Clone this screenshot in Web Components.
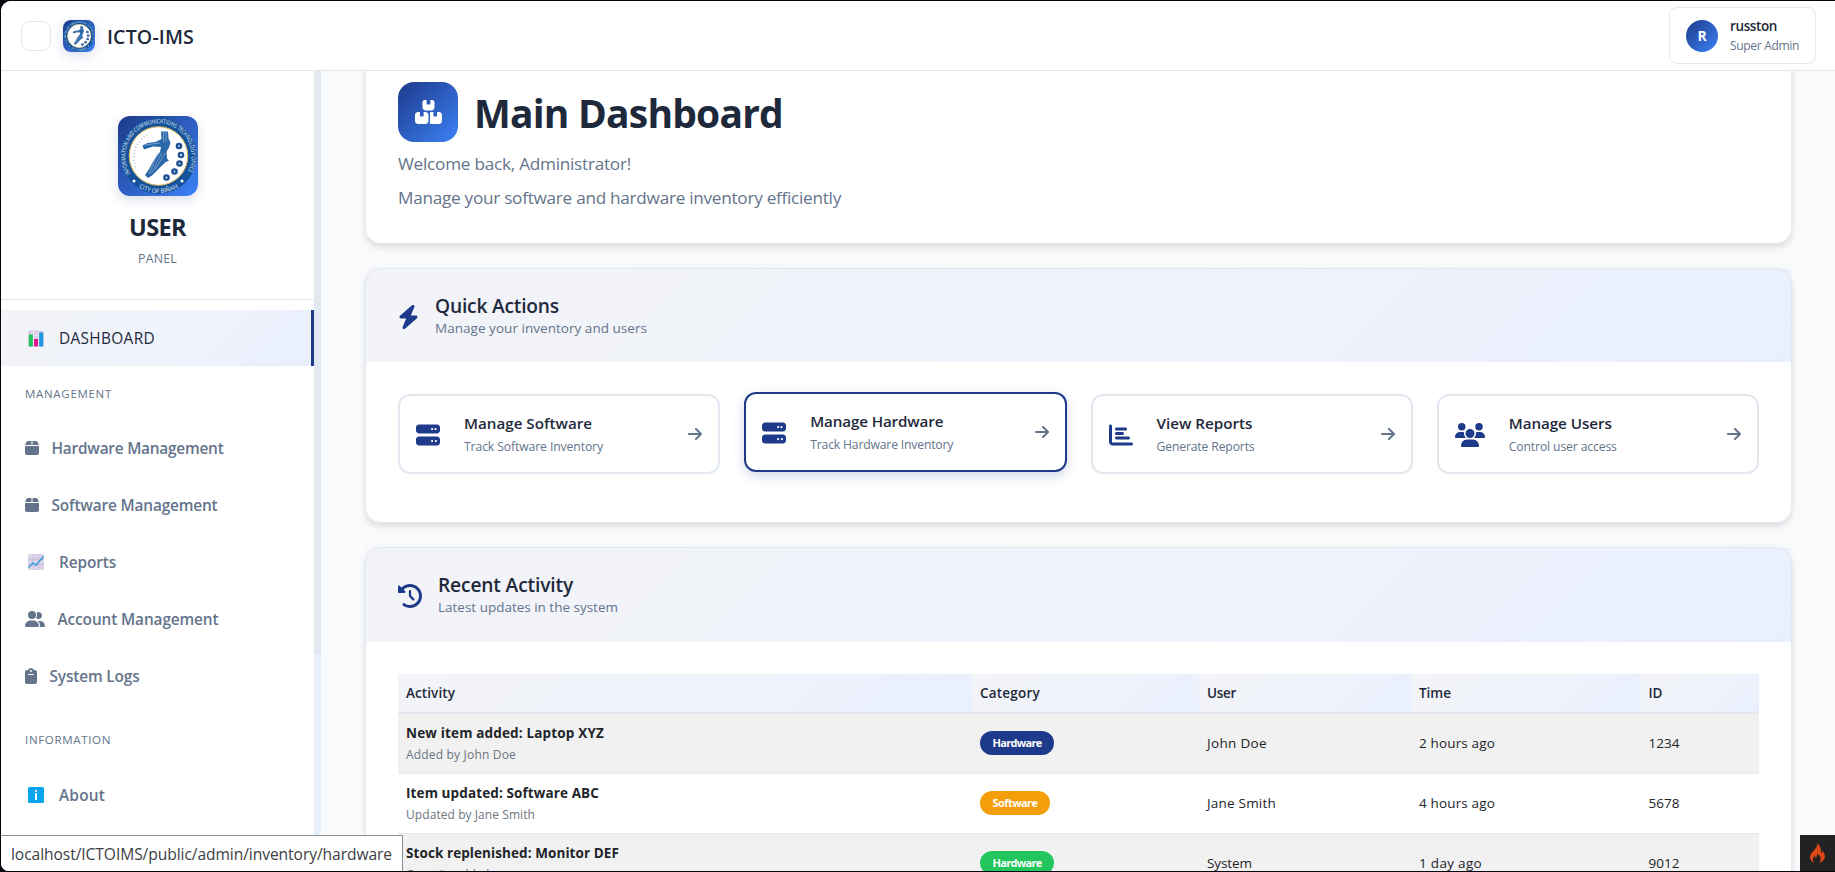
<!DOCTYPE html>
<html lang="en">
<head>
<meta charset="utf-8">
<title>ICTO-IMS</title>
<style>
html,body{margin:0;height:872px;overflow:hidden;background:#05060f}
body{font-family:"Open Sans","Noto Sans",sans-serif;color:#1e293b}
</style>
</head>
<body>
<ims-app></ims-app>
<script>
const ICONS = {
  bolt:[448,'M349.4 44.6c5.9-13.7 1.5-29.7-10.6-38.5s-28.6-8-39.9 1.8l-256 224c-10 8.8-13.6 22.9-8.9 35.3S50.7 288 64 288H175.5L98.6 467.4c-5.9 13.7-1.5 29.7 10.6 38.5s28.6 8 39.9-1.8l256-224c10-8.8 13.6-22.9 8.9-35.3s-16.6-20.7-30-20.7H272.5L349.4 44.6z'],
  server:[512,'M64 32C28.7 32 0 60.7 0 96v64c0 35.3 28.7 64 64 64H448c35.3 0 64-28.7 64-64V96c0-35.3-28.7-64-64-64H64zm280 72a24 24 0 1 1 0 48 24 24 0 1 1 0-48zm48 24a24 24 0 1 1 48 0 24 24 0 1 1 -48 0zM64 288c-35.3 0-64 28.7-64 64v64c0 35.3 28.7 64 64 64H448c35.3 0 64-28.7 64-64V352c0-35.3-28.7-64-64-64H64zm280 72a24 24 0 1 1 0 48 24 24 0 1 1 0-48zm56 24a24 24 0 1 1 48 0 24 24 0 1 1 -48 0z'],
  boxes:[576,'M248 0H208c-26.5 0-48 21.5-48 48V160c0 35.3 28.7 64 64 64H352c35.3 0 64-28.7 64-64V48c0-26.5-21.5-48-48-48H328V80c0 8.8-7.2 16-16 16H264c-8.8 0-16-7.2-16-16V0zM64 256c-35.3 0-64 28.7-64 64V448c0 35.3 28.7 64 64 64H224c35.3 0 64-28.7 64-64V320c0-35.3-28.7-64-64-64H184v80c0 8.8-7.2 16-16 16H120c-8.8 0-16-7.2-16-16V256H64zM352 512H512c35.3 0 64-28.7 64-64V320c0-35.3-28.7-64-64-64H472v80c0 8.8-7.2 16-16 16H408c-8.8 0-16-7.2-16-16V256H352c-15 0-28.8 5.1-39.7 13.8c4.9 10.4 7.7 22 7.7 34.2V464c0 12.2-2.8 23.8-7.7 34.2C323.2 506.9 337 512 352 512z'],
  box:[448,'M50.7 58.5L0 160H208V32H93.7C75.5 32 58.9 42.3 50.7 58.5zM240 160H448L397.3 58.5C389.1 42.3 372.5 32 354.3 32H240V160zm208 32H0V416c0 35.3 28.7 64 64 64H384c35.3 0 64-28.7 64-64V192z'],
  group:[640,'M96 128a128 128 0 1 1 256 0A128 128 0 1 1 96 128zM0 482.3C0 383.8 79.8 304 178.3 304h91.4C368.2 304 448 383.8 448 482.3c0 16.4-13.3 29.7-29.7 29.7H29.7C13.3 512 0 498.7 0 482.3zM609.3 512H471.4c5.4-9.4 8.6-20.3 8.6-32v-8c0-60.7-27.1-115.2-69.8-151.8c2.4-.1 4.7-.2 7.1-.2h61.4C567.8 320 640 392.2 640 481.3c0 17-13.8 30.7-30.7 30.7zM432 256c-31 0-59-12.6-79.3-32.9C372.4 196.5 384 163.6 384 128c0-26.8-6.6-52.1-18.3-74.3C384.3 40.1 407.2 32 432 32c61.9 0 112 50.1 112 112s-50.1 112-112 112z'],
  clipboard:[384,'M192 0c-41.8 0-77.4 26.7-90.5 64H64C28.7 64 0 92.7 0 128V448c0 35.3 28.7 64 64 64H320c35.3 0 64-28.7 64-64V128c0-35.3-28.7-64-64-64H282.5C269.4 26.7 233.8 0 192 0zm0 64a32 32 0 1 1 0 64 32 32 0 1 1 0-64zM112 192H272c8.8 0 16 7.2 16 16s-7.2 16-16 16H112c-8.8 0-16-7.2-16-16s7.2-16 16-16z'],
  arrow:[448,'M438.6 278.6c12.5-12.5 12.5-32.8 0-45.3l-160-160c-12.5-12.5-32.8-12.5-45.3 0s-12.5 32.8 0 45.3L338.8 224 32 224c-17.7 0-32 14.3-32 32s14.3 32 32 32l306.7 0L233.4 393.4c-12.5 12.5-12.5 32.8 0 45.3s32.8 12.5 45.3 0l160-160z'],
  history:[512,'M75 75L41 41C25.9 25.9 0 36.6 0 57.9V168c0 13.3 10.7 24 24 24H134.1c21.4 0 32.1-25.9 17-41l-30.8-30.8C155 85.5 203 64 256 64c106 0 192 86 192 192s-86 192-192 192c-40.8 0-78.6-12.7-109.7-34.4c-14.5-10.1-34.4-6.6-44.6 7.9s-6.6 34.4 7.9 44.6C151.2 495 201.7 512 256 512c141.4 0 256-114.6 256-256S397.4 0 256 0C185.3 0 121.3 28.7 75 75zm181 53c-13.3 0-24 10.7-24 24V256c0 6.4 2.5 12.5 7 17l72 72c9.4 9.4 24.6 9.4 33.9 0s9.4-24.6 0-33.9l-65-65V152c0-13.3-10.7-24-24-24z'],
  chart:[512,'M32 32c17.7 0 32 14.3 32 32V400c0 8.8 7.2 16 16 16H480c17.7 0 32 14.3 32 32s-14.3 32-32 32H80c-44.2 0-80-35.8-80-80V64C0 46.3 14.3 32 32 32zm96 96c0-17.7 14.3-32 32-32l192 0c17.7 0 32 14.3 32 32s-14.3 32-32 32l-192 0c-17.7 0-32-14.3-32-32zm32 64H288c17.7 0 32 14.3 32 32s-14.3 32-32 32H160c-17.7 0-32-14.3-32-32s14.3-32 32-32zm0 96H416c17.7 0 32 14.3 32 32s-14.3 32-32 32H160c-17.7 0-32-14.3-32-32s14.3-32 32-32z'],
  users:[640,'M144 0a80 80 0 1 1 0 160A80 80 0 1 1 144 0zM512 0a80 80 0 1 1 0 160A80 80 0 1 1 512 0zM0 298.7C0 239.8 47.8 192 106.7 192h42.7c15.9 0 31 3.5 44.6 9.7c-1.3 7.2-1.9 14.7-1.9 22.3c0 38.2 16.8 72.5 43.3 96c-.2 0-.4 0-.7 0H21.3C9.6 320 0 310.4 0 298.7zM405.3 320c-.2 0-.4 0-.7 0c26.6-23.5 43.3-57.8 43.3-96c0-7.6-.7-15-1.9-22.3c13.6-6.3 28.7-9.7 44.6-9.7h42.7C592.2 192 640 239.8 640 298.7c0 11.8-9.6 21.3-21.3 21.3H405.3zM224 224a96 96 0 1 1 192 0 96 96 0 1 1 -192 0zM128 485.3C128 411.7 187.7 352 261.3 352H378.7C452.3 352 512 411.7 512 485.3c0 14.7-11.9 26.7-26.7 26.7H154.7c-14.7 0-26.7-11.9-26.7-26.7z']
};
const ART = {
  bars:'<svg viewBox="0 0 16 17" width="16" height="17"><rect width="16" height="16" y=".5" rx="1.5" fill="#d9cfe6"/><path d="M0 5.5h16M0 11h16M5.3 .5v16M10.7 .5v16" stroke="#efe9f5" stroke-width=".8"/><rect x=".8" y="4.5" width="4" height="12" fill="#1fc35c"/><rect x="6" y="9" width="4" height="7.500" fill="#e5178f"/><rect x="11.200" y="2.500" width="4" height="14" fill="#1d96e0"/></svg>',
  trend:'<svg viewBox="0 0 16 16" width="16" height="16"><rect width="16" height="16" rx="1.500" fill="#ddd3e8"/><path d="M0 5.300h16M0 10.700h16M5.300 0v16M10.700 0v16" stroke="#c9bcd8" stroke-width=".8"/><path d="M.5 13.500L5 9l3 2.300L15.700 2.300" fill="none" stroke="#2f9be0" stroke-width="1.400"/></svg>',
  info:'<svg viewBox="0 0 16 16" width="16" height="16"><rect width="16" height="16" rx="1.500" fill="#08a5ee"/><rect x="7.100" y="3" width="1.900" height="1.900" fill="#fff"/><rect x="7.100" y="6.200" width="1.900" height="6.800" fill="#fff"/></svg>',
  flame:'<svg viewBox="0 0 18 21" width="17" height="20"><path d="M8.600 0c1 2.600-.4 4.300-2.300 6.400C3.500 9.400 1 11.600 1 14.700c0 2.900 2 5.200 5 6.100-1.500-1.200-2-2.300-1.900-3.700.1-1.500 1.200-2.500 1.500-3.700 1 .6 1.300 1.500 1.200 2.600 1.600-1.300 2.100-3 1.700-4.900 2.500 1.500 3.900 3.600 3.900 5.700 0 1.700-.8 3-2.100 4 3.700-.9 6.500-3.200 6.500-6.700 0-2.500-1.300-4.300-2.700-6.200.1 1.500-.5 2.500-1.500 3.100C13.400 6.900 11.800 2.600 8.600 0z" fill="#dd4814"/></svg>'
};
function element(name, html, after){
  customElements.define(name, class extends HTMLElement{
    constructor(){ super(); this.attachShadow({mode:'open'}); }
    connectedCallback(){
      this.shadowRoot.innerHTML = typeof html === 'function' ? html(this) : html;
      if(after) after(this);
    }
  });
}
const GRAD='linear-gradient(135deg,#1e3a8a,#3b82f6)';
const SOFT='linear-gradient(135deg,#f3f4f8 0%,#eff3fb 50%,#e9f0fd 100%)';

element('ims-icon', e=>{
  const n=e.getAttribute('name');
  if(ART[n]) return `<style>:host{display:flex;flex:none}</style>${ART[n]}`;
  const [w,d]=ICONS[n], s=+e.getAttribute('size');
  return `<style>:host{display:flex;flex:none}</style><svg width="${w*s/512}" height="${s}" viewBox="0 0 ${w} 512" fill="currentColor"><path d="${d}"/></svg>`;
});

element('ims-seal', e=>`<style>:host{display:block;flex:none;overflow:hidden;background:${GRAD};box-shadow:0 4px 12px rgba(30,58,138,.16)}svg{display:block;width:100%;height:100%}</style>
<svg viewBox="0 0 80 80">
<circle cx="40.500" cy="40" r="38" fill="#14539c"/>
<circle cx="40.500" cy="40" r="29.300" fill="#fff" stroke="#d9b24a" stroke-width="1"/>
<defs><path id="t" d="M12.400 57.600A33 33 0 1 1 68.600 57.600"/><path id="b" d="M16 67.500A36.300 36.300 0 0 0 65 67.500"/></defs>
<g fill="#e6effa" font-family="Open Sans,sans-serif" font-size="6">
<text textLength="137" lengthAdjust="spacingAndGlyphs"><textPath href="#t">INFORMATION AND COMMUNICATIONS TECHNOLOGY OFFICE</textPath></text>
<text font-size="6"><textPath href="#b" startOffset="50%" text-anchor="middle">CITY OF BIÑAN</textPath></text></g>
<circle cx="16" cy="65" r="1.500" fill="#fff"/><circle cx="64" cy="65" r="1.500" fill="#fff"/>
<path d="M43 15.500h7l.5 7 2 4-1.500 5-2.500 4 .5 7 2 2-4 2-5 5-8 8-4 2.500-3-3 4-6 5-9 6-8 1-5-8-.500-9 3-1.500-4 5-2.500 8-1 6-3z" fill="#2a67a8"/>
<path d="M45.500 16v10M48 16v10M27 29l15-2M40 36l-9 22M43.500 37l-10 20M47 37l-10 17" stroke="#a9c4e2" stroke-width=".6" fill="none"/>
<g fill="#1c4f93"><circle cx="61" cy="30" r="3.300"/><circle cx="63" cy="39" r="3.300"/><circle cx="61.500" cy="47.500" r="3.300"/><circle cx="56.500" cy="55.500" r="3.300"/><circle cx="48.500" cy="61.500" r="3.300"/></g>
<g fill="#c8d9ee"><circle cx="61" cy="30" r="1"/><circle cx="63" cy="39" r="1.200"/><circle cx="61.500" cy="47.500" r="1"/><circle cx="56.500" cy="55.500" r=".9"/><circle cx="48.500" cy="61.500" r="1.100"/></g>
<path d="M17.500 51A26 26 0 0 1 31 18" fill="none" stroke="#8ba3bf" stroke-width="1.600" stroke-dasharray=".7 2.600"/>
</svg>`);

element('ims-navbar', `<style>
:host{display:flex;box-sizing:border-box;height:70px;flex:none;align-items:center;background:#fff;border-bottom:1px solid #e2e8f0;padding:0 19px 0 20px;position:relative}
.toggle{box-sizing:border-box;width:30px;height:30px;border:1px solid #e2e8f0;border-radius:8px;margin-right:12px}
ims-seal{width:32px;height:32px;border-radius:8px;margin-right:12px}
.brand{font-size:19.600px;line-height:28px;font-weight:600;flex:1;padding-top:2px}
.user{box-sizing:border-box;height:57px;width:147px;border:1px solid #e2e8f0;border-radius:8px;display:flex;align-items:center;padding-left:16px;gap:12px;color:#1e293b}
.av{width:32px;height:32px;border-radius:50%;background:${GRAD};color:#fff;font-weight:700;font-size:14px;display:grid;place-items:center}
.n{font-size:13.500px;font-weight:600;line-height:20px}.r{font-size:12px;line-height:18px;color:#64748b;padding-top:1px}
.n,.r{display:block}
</style><div class="toggle"></div><ims-seal></ims-seal><div class="brand"><fit-text w="87">ICTO-IMS</fit-text></div>
<div class="user"><div class="av">R</div><div><div class="n"><fit-text w="47">russton</fit-text></div><div class="r"><fit-text w="69">Super Admin</fit-text></div></div></div>`);

element('ims-nav-item', e=>`<style>
:host{display:flex;box-sizing:border-box;height:56px;margin-bottom:1px;align-items:center;padding-left:${e.getAttribute('pad')||24}px;gap:${e.getAttribute('gap')}px;color:#64748b;font-size:15.400px;font-weight:600;line-height:24px}
:host([active]){background:${SOFT};border-right:3px solid #1e3a8a;color:#1e293b;font-weight:500}
fit-text{padding-top:2px}
</style><ims-icon name="${e.getAttribute('icon')}" size="16"></ims-icon><fit-text w="${e.getAttribute('w')}"><slot></slot></fit-text>`);

element('ims-sidebar', `<style>
:host{display:flex;width:320px;flex:none;background:#fff}
.in{width:313px}
.head{box-sizing:border-box;height:229px;border-bottom:1px solid #e2e8f0;display:flex;flex-direction:column;align-items:center;padding-top:45px;margin-bottom:10px}
ims-seal{width:80px;height:80px;border-radius:12px}
.u{font-size:23.500px;font-weight:700;line-height:32px;margin-top:15px}
.p{font-size:12.400px;line-height:20px;color:#64748b;margin-top:6px}
.lab{font-size:11.500px;font-weight:500;line-height:18px;height:18px;color:#64748b;padding-left:24px}
.bar{width:7px;background:#eaf1fe}
.thumb{height:584px;background:#e2e8f0;border-radius:0 0 4px 4px}
</style><div class="in"><div class="head"><ims-seal></ims-seal><div class="u"><fit-text w="57">USER</fit-text></div><div class="p"><fit-text w="39">PANEL</fit-text></div></div>
<ims-nav-item active icon="bars" pad="27" gap="15" w="96">DASHBOARD</ims-nav-item>
<div class="lab" style="margin:19px 0 17px"><fit-text w="87">MANAGEMENT</fit-text></div>
<ims-nav-item icon="box" gap="12.500" w="172">Hardware Management</ims-nav-item>
<ims-nav-item icon="box" gap="12.500" w="166">Software Management</ims-nav-item>
<ims-nav-item icon="trend" pad="27" gap="15" w="57">Reports</ims-nav-item>
<ims-nav-item icon="group" gap="12.500" w="161">Account Management</ims-nav-item>
<ims-nav-item icon="clipboard" gap="12.500" w="90">System Logs</ims-nav-item>
<div class="lab" style="margin:27px 0 18px"><fit-text w="86">INFORMATION</fit-text></div>
<ims-nav-item icon="info" pad="27" gap="15" w="46">About</ims-nav-item>
</div><div class="bar"><div class="thumb"></div></div>`);

element('ims-card', e=>`<style>
:host{display:block;box-sizing:border-box;position:relative;background:#fff;border:1px solid transparent;border-radius:16px;box-shadow:0 4px 6px rgba(0,0,0,.1),0 0 5px rgba(0,0,0,.03);background-clip:border-box}
:host::after{content:"";position:absolute;inset:-1px;border:1px solid #e2e8f0;border-radius:16px;pointer-events:none}
.h{height:var(--hh,93px);background:${SOFT};display:flex;align-items:center;padding:0 32px;gap:16px;color:#1e3a8a}
ims-icon{padding-top:var(--ip,3px)}
.t{font-size:19.200px;font-weight:600;line-height:26px;color:#1e293b;margin-top:-1px}.s{font-size:13.500px;line-height:20px;color:#64748b;margin-top:-1px}
.b{padding:32px}
</style>${e.hasAttribute('icon')?`<div class="h"><ims-icon name="${e.getAttribute('icon')}" size="24"></ims-icon><div><div class="t"><fit-text w="${e.getAttribute('tw')}">${e.getAttribute('heading')}</fit-text></div><div class="s"><fit-text w="${e.getAttribute('sw')}">${e.getAttribute('sub')}</fit-text></div></div></div>`:''}<div class="b"><slot></slot></div>`);

element('ims-hero', `<style>
:host{display:block;height:172px;box-sizing:border-box}
.top{display:flex;align-items:center;gap:16px}
.ic{width:60px;height:60px;border-radius:16px;background:${GRAD};color:#fff;display:grid;place-items:center}
.t{font-size:39px;font-weight:700;line-height:60px;height:60px;padding-top:1px;box-sizing:border-box}
.s{font-size:17.200px;line-height:26px;color:#64748b}
</style><div class="top"><div class="ic"><ims-icon name="boxes" size="24"></ims-icon></div><div class="t"><fit-text w="309">Main Dashboard</fit-text></div></div>
<div class="s" style="margin-top:9px"><fit-text w="233">Welcome back, Administrator!</fit-text></div>
<div class="s" style="margin-top:8px"><fit-text w="443">Manage your software and hardware inventory efficiently</fit-text></div>`);

element('ims-action', e=>`<style>
:host{display:flex;box-sizing:border-box;height:80px;border:2px solid #e2e8f0;border-radius:12px;background:#fff;align-items:center;padding:0 16px;color:#1e3a8a}
:host([hover]){border-color:#1e3a8a;transform:translateY(-2px);box-shadow:0 4px 12px rgba(30,58,138,.2)}
.x{flex:1;margin-left:24px}
.g{padding-top:1px}
.t{font-size:15.200px;font-weight:600;line-height:22px;color:#1e293b}.s{font-size:12.200px;line-height:18px;color:#64748b;margin-top:4px}
.a{color:#64748b}
</style><ims-icon class="g" name="${e.getAttribute('icon')}" size="24"></ims-icon><div class="x"><div class="t"><fit-text w="${e.getAttribute('tw')}">${e.getAttribute('heading')}</fit-text></div><div class="s"><fit-text w="${e.getAttribute('sw')}"><slot></slot></fit-text></div></div><ims-icon class="a" name="arrow" size="16"></ims-icon>`);

element('ims-badge', e=>`<style>:host{display:inline-flex;box-sizing:border-box;height:24px;border-radius:12px;padding:0 12.500px;align-items:center;color:#fff;font-size:11px;font-weight:700;line-height:16px;background:${e.getAttribute('tone')}}fit-text{padding-top:1px}</style><fit-text w="${e.getAttribute('w')}"><slot></slot></fit-text>`);

element('ims-row', `<style>
:host{display:grid;grid-template-columns:574px 227px 212px 229.500px 1fr;box-sizing:border-box;height:60px;border-bottom:1px solid #e2e8f0;font-size:13.500px;color:#212529}
:host([odd]){background:#f1f1f1}
:host([head]){height:40px;border-bottom:2px solid #e2e8f0;font-weight:600;color:#1e293b}
div{display:flex;align-items:center;padding:0 0 2px 8px}
:host([head]) div{background:${SOFT};padding-bottom:0}
</style><div><slot name="a"></slot></div><div><slot name="b"></slot></div><div><slot name="c"></slot></div><div><slot name="d"></slot></div><div><slot name="e"></slot></div>`);

element('ims-entry', e=>`<style>:host{display:block}.t{font-weight:700;line-height:22px;font-size:13.500px}.s{font-size:12px;line-height:18px;color:#6c757d;margin-top:2px}</style>
<div class="t"><fit-text w="${e.getAttribute('tw')}">${e.getAttribute('heading')}</fit-text></div><div class="s"><fit-text w="${e.getAttribute('sw')}"><slot></slot></fit-text></div>`);

element('ims-main', `<style>
:host{display:block;flex:1;min-width:0;background:#f8fafc;padding:0 43px 0 44px;overflow:hidden}
.stack{display:flex;flex-direction:column;gap:24px;margin-top:-22px}
.grid{display:grid;grid-template-columns:repeat(4,1fr);gap:24px;height:96px;align-items:start}
.hero{height:195px;--hh:0}
.recent{--hh:94px;--ip:1px;height:500px}
</style><div class="stack">
<ims-card class="hero"><ims-hero></ims-hero></ims-card>
<ims-card icon="bolt" heading="Quick Actions" tw="124" sub="Manage your inventory and users" sw="212">
<div class="grid">
<ims-action icon="server" heading="Manage Software" tw="128" sw="139">Track Software Inventory</ims-action>
<ims-action hover icon="server" heading="Manage Hardware" tw="133" sw="143">Track Hardware Inventory</ims-action>
<ims-action icon="chart" heading="View Reports" tw="96" sw="98">Generate Reports</ims-action>
<ims-action icon="users" heading="Manage Users" tw="103" sw="108">Control user access</ims-action>
</div></ims-card>
<ims-card class="recent" icon="history" heading="Recent Activity" tw="135" sub="Latest updates in the system" sw="180">
<ims-row head><fit-text slot="a" w="49">Activity</fit-text><fit-text slot="b" w="60">Category</fit-text><fit-text slot="c" w="29">User</fit-text><fit-text slot="d" w="32">Time</fit-text><fit-text slot="e" w="14">ID</fit-text></ims-row>
<ims-row odd><ims-entry slot="a" heading="New item added: Laptop XYZ" tw="198" sw="110">Added by John Doe</ims-entry><ims-badge slot="b" tone="#1e3a8a" w="49">Hardware</ims-badge><fit-text slot="c" w="60">John Doe</fit-text><fit-text slot="d" w="76">2 hours ago</fit-text><fit-text slot="e" w="31">1234</fit-text></ims-row>
<ims-row><ims-entry slot="a" heading="Item updated: Software ABC" tw="193" sw="129">Updated by Jane Smith</ims-entry><ims-badge slot="b" tone="#f59e0b" w="45">Software</ims-badge><fit-text slot="c" w="69">Jane Smith</fit-text><fit-text slot="d" w="76">4 hours ago</fit-text><fit-text slot="e" w="31">5678</fit-text></ims-row>
<ims-row odd><ims-entry slot="a" heading="Stock replenished: Monitor DEF" tw="213" sw="83">Quantity added</ims-entry><ims-badge slot="b" tone="#22c55e" w="49">Hardware</ims-badge><fit-text slot="c" w="45">System</fit-text><fit-text slot="d" w="63">1 day ago</fit-text><fit-text slot="e" w="31">9012</fit-text></ims-row>
</ims-card></div>`);

element('ims-app', `<style>
:host{display:flex;flex-direction:column;box-sizing:border-box;height:870px;margin:1px 0 1px 1px;border-radius:10px 0 0 8px;overflow:hidden;background:#fff;position:relative}
.body{display:flex;flex:1;min-height:0;overflow:hidden}
.status{position:absolute;left:0;bottom:0;box-sizing:border-box;width:402px;height:36px;border:1px solid #8a8d91;border-width:1px 1px 0 0;background:#fff;padding:5px 0 0 10px;font-size:15.600px;line-height:26px;color:#3c4043}
.debug{position:absolute;right:0;bottom:0;width:35px;height:36px;background:#222;display:grid;place-items:center}
</style><ims-navbar></ims-navbar><div class="body"><ims-sidebar></ims-sidebar><ims-main></ims-main></div>
<div class="status"><fit-text w="381">localhost/ICTOIMS/public/admin/inventory/hardware</fit-text></div>
<div class="debug"><ims-icon name="flame"></ims-icon></div>`);

// Tracks its text out or in so that the run is exactly w pixels wide.
element('fit-text', '<style>:host{display:inline-block;white-space:nowrap}</style><slot></slot>', e=>{
  let src=e.textContent, slot=e.querySelector('slot');
  if(slot) src=slot.assignedNodes().map(n=>n.textContent).join('');
  const n=src.trim().length, w=+e.getAttribute('w');
  if(n) e.style.letterSpacing=((w-e.getBoundingClientRect().width)/n)+'px';
});
</script>
</body>
</html>
